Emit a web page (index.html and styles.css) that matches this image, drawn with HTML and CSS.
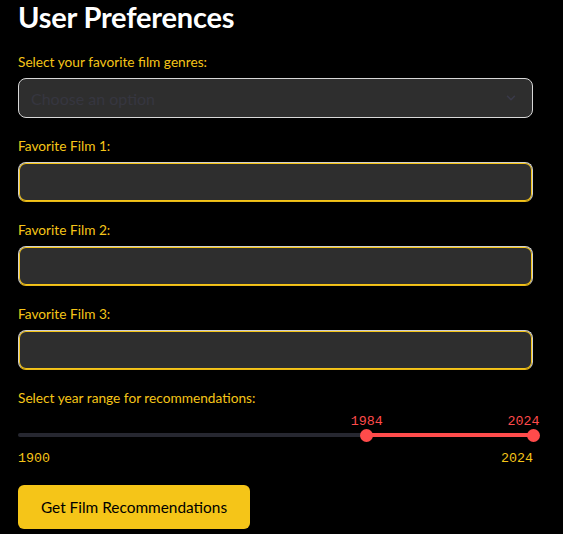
FILE: index.html
```html
<!DOCTYPE html>
<html>
<head>
<meta charset="utf-8">
<link rel="stylesheet" href="styles.css">
</head>
<body>
<main class="page">
  <h2 class="title">User Preferences</h2>

  <div class="field">
    <label class="label">Select your favorite film genres:</label>
    <div class="select">
      <span class="placeholder">Choose an option</span>
      <svg class="chevron" width="14" height="14" viewBox="0 0 24 24"><path d="M6 9l6 6 6-6" fill="none" stroke="currentColor" stroke-width="2.5" stroke-linecap="round" stroke-linejoin="round"/></svg>
    </div>
  </div>

  <div class="field">
    <label class="label">Favorite Film 1:</label>
    <div class="input"></div>
  </div>

  <div class="field">
    <label class="label">Favorite Film 2:</label>
    <div class="input"></div>
  </div>

  <div class="field">
    <label class="label">Favorite Film 3:</label>
    <div class="input"></div>
  </div>

  <div class="field slider-field">
    <label class="label">Select year range for recommendations:</label>
    <div class="slider">
      <div class="track">
        <div class="fill" style="left:67.74%;right:0"></div>
        <div class="thumb" style="left:67.74%"><span class="val">1984</span></div>
        <div class="thumb" style="left:100%"><span class="val val-end">2024</span></div>
      </div>
    </div>
    <div class="ticks"><span>1900</span><span>2024</span></div>
  </div>

  <button class="btn">Get Film Recommendations</button>
</main>
</body>
</html>
```
FILE: styles.css
```css
* { box-sizing: border-box; }
html, body { margin: 0; background: #000; }
body { font-family: "Lato", "Liberation Sans", sans-serif; color: #fff; }
.page { width: 533px; padding: 0 0 0 18px; display: flex; flex-direction: column; }
.title { margin: 0; font-size: 29px; font-weight: 700; line-height: 34px; color: #fff; letter-spacing: -0.2px; height: 52px; }
.field { display: flex; flex-direction: column; gap: 6px; margin-bottom: 18px; }
.label { font-size: 13.7px; line-height: 20px; color: #f5c518; }
.select, .input { height: 40px; border-radius: 8px; background: #2e2e2e; }
.select { border: 1px solid #d8d8d8; display: flex; align-items: center; justify-content: space-between; padding: 0 14px 0 12px; }
.placeholder { font-size: 16px; color: #363640; }
.chevron { color: #3a3a4a; }
.input { border: 1px solid #cfcfcf; border-bottom-color: #e8b818; box-shadow: inset 0 0 0 1px #f5c518; }
.slider-field { gap: 0; margin-bottom: 18px; }
.slider { height: 40px; position: relative; }
.track { position: absolute; left: 0; right: 0; top: 25px; height: 4px; border-radius: 2px; background: #262730; }
.fill { position: absolute; top: 0; bottom: 0; background: #ff4b4b; }
.thumb { position: absolute; top: 50%; width: 13px; height: 13px; margin: -6.5px 0 0 -6.5px; border-radius: 50%; background: #ff4b4b; }
.val { position: absolute; bottom: 12px; left: 50%; transform: translateX(-50%); font-family: "Liberation Mono", monospace; font-size: 13.33px; line-height: 16px; color: #ff4b4b; }
.val-end { left: auto; right: 0; transform: none; }
.ticks { display: flex; justify-content: space-between; font-family: "Liberation Mono", monospace; font-size: 13.33px; line-height: 16px; color: #f5c518; margin-top: 3px; }
.btn { align-self: flex-start; height: 44px; width: 232px; border: none; border-radius: 6px; background: #f5c518; color: #000; font-family: "Lato", "Liberation Sans", sans-serif; font-size: 15.4px; padding: 0; }
```
